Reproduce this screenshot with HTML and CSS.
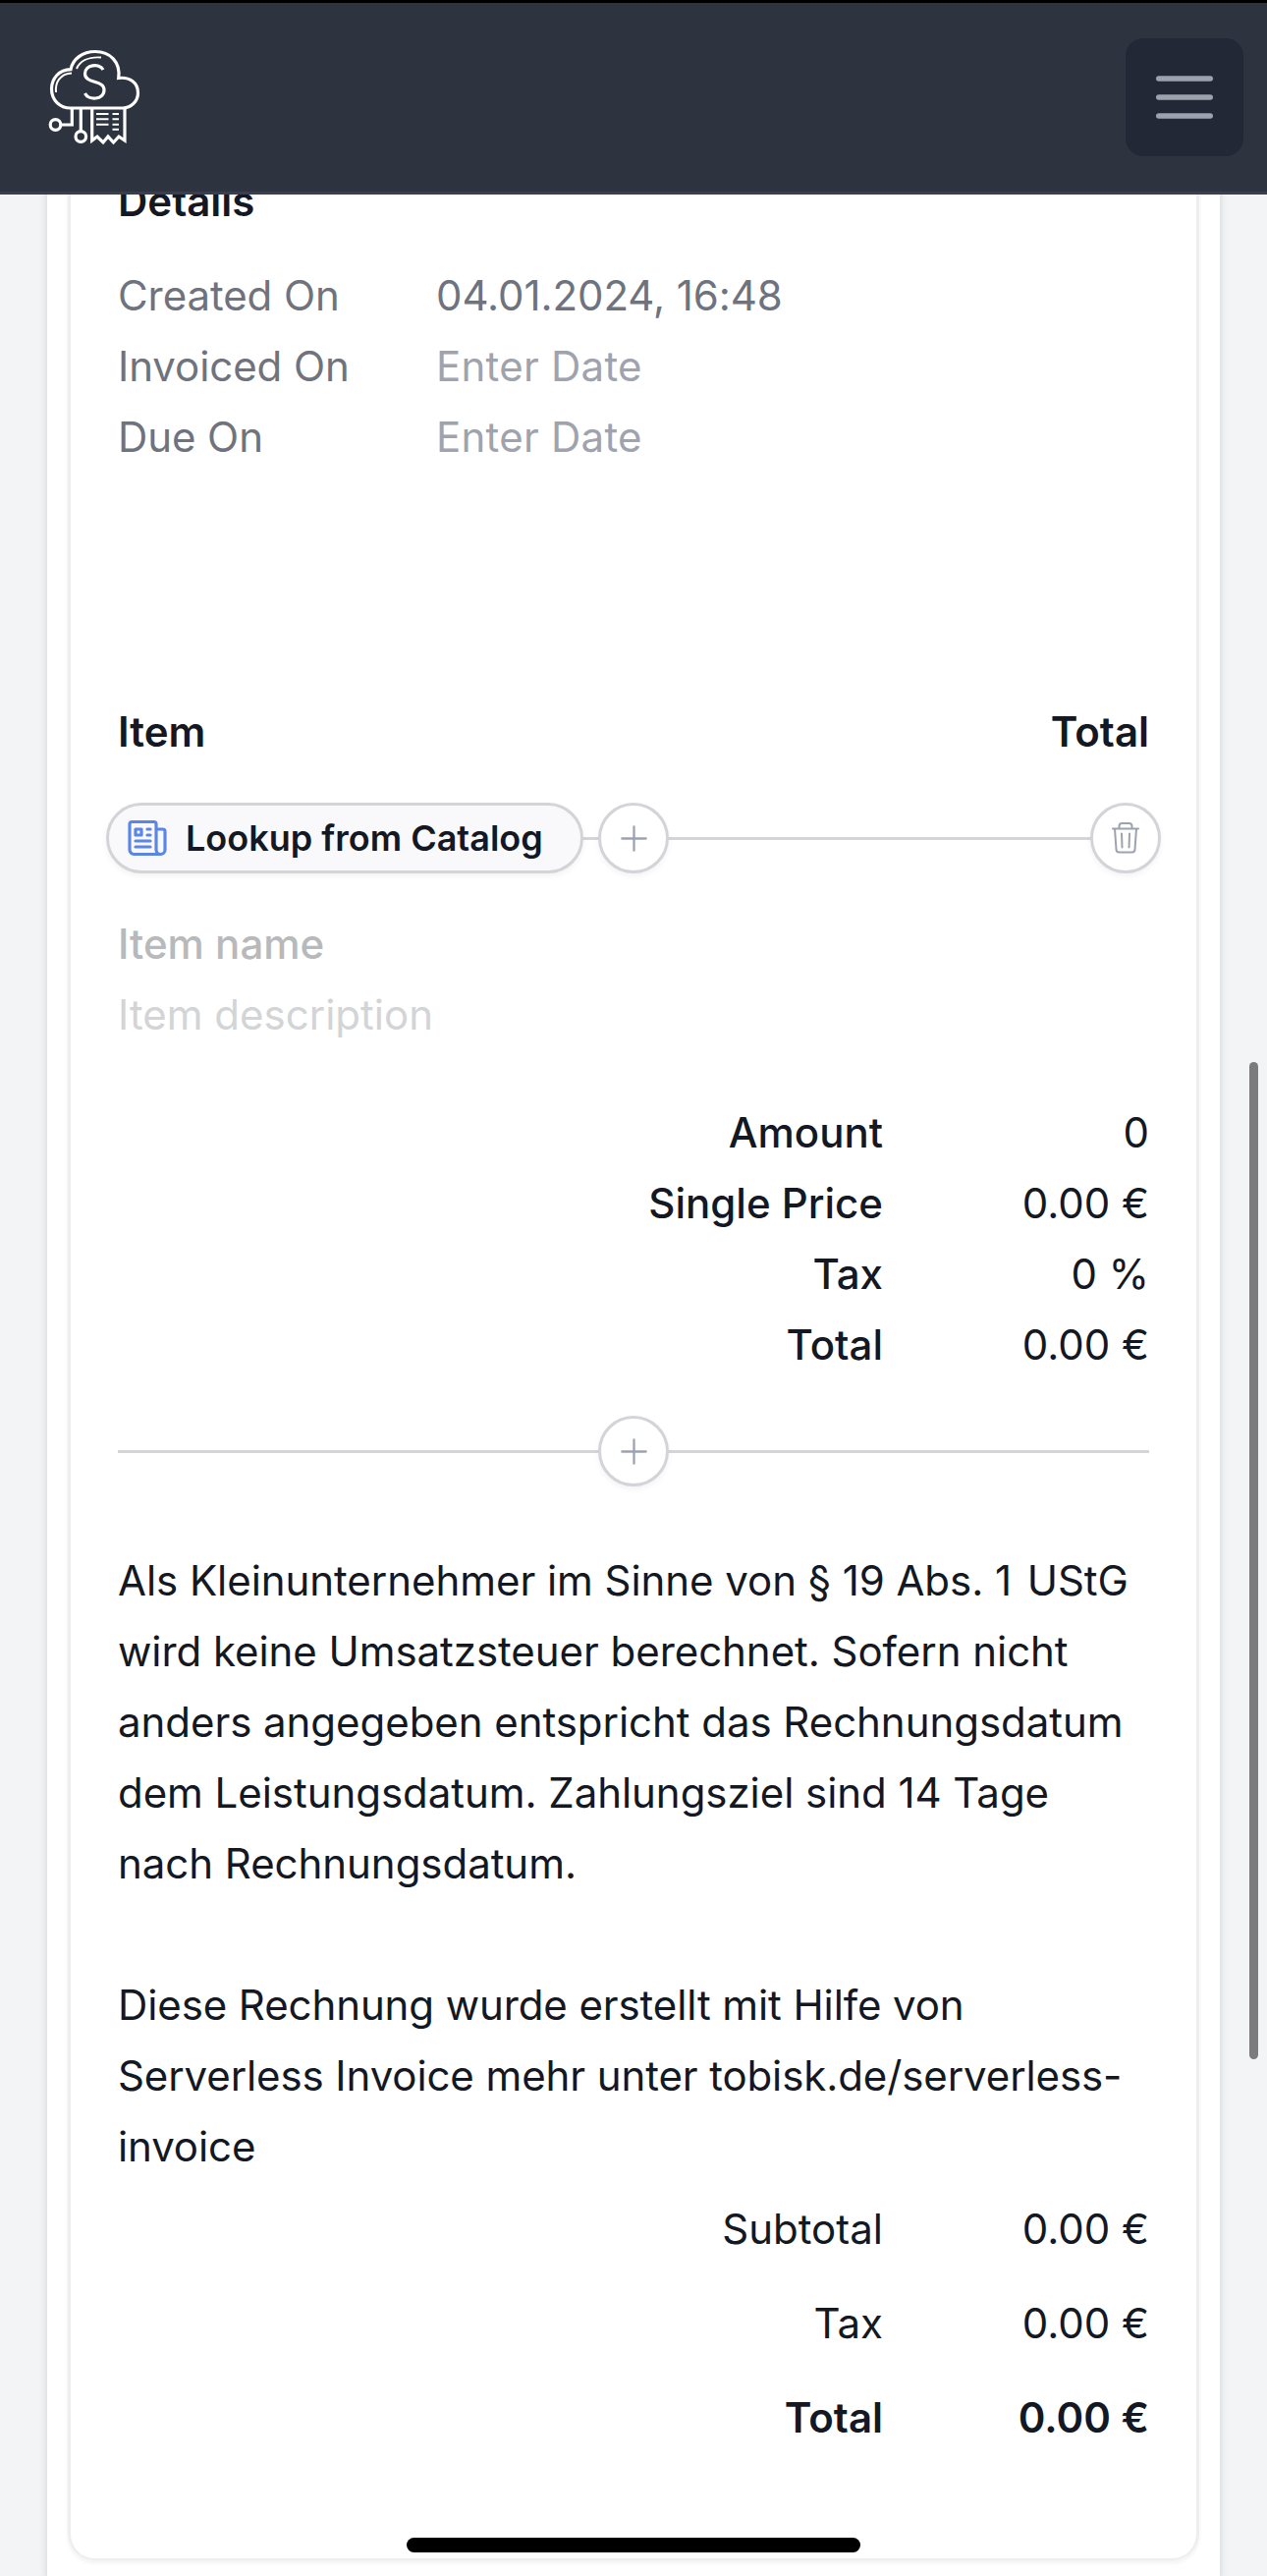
FILE: index.html
```html
<!DOCTYPE html>
<html lang="en">
<head>
<meta charset="utf-8">
<title>Serverless Invoice</title>
<link rel="stylesheet" href="styles.css">
</head>
<body>
<header class="topbar">
  <svg class="logo" viewBox="0 0 102 102" fill="none" stroke="#fff" stroke-width="3.2">
    <path d="M26 62H79A15.500 15.500 0 0 0 94.500 46.500C94.500 36 86 30 74.700 31.500C77 15 66 4.500 51 4.500C38 4.500 28 12 26 22.700C14 23 6.500 32 6.500 42.500C6.500 54 15 62 26 62Z"/>
    <path d="M32 22C35 15 43 9.500 57 10.500M11 46C10 36 15 27 27 26.500" stroke-width="2"/>
    <path d="M59 23C55 16 40.500 17.500 40.500 27C40.500 37.500 60 33 60 43.500C60 54 44 54.500 40.500 47"/>
    <path d="M27.300 62V79H16M36.300 62V85M47.700 62V95L53 91L59 97L64 91L69.500 97L75 91L81 95V62"/>
    <circle cx="10.500" cy="79" r="5.300"/><circle cx="36.300" cy="91" r="5.300"/>
    <path d="M52 68H64.500M52 73.300H64.500M52 78.700H64.500M68.500 68H75M68.500 73.300H75M68.500 78.700H75M68.500 83.700H75" stroke-width="2"/>
  </svg>
  <button class="menu" aria-label="Menu">
    <svg viewBox="0 0 58 44" fill="none" stroke="#9ca3af" stroke-width="5.600" stroke-linecap="round"><path d="M2.800 3h52.400M2.800 22h52.400M2.800 41h52.400"/></svg>
  </button>
</header>
<main class="panel">
  <section class="invoice">
    <h2 class="strong">Details</h2>
    <dl class="details">
      <dt>Created On</dt><dd>04.01.2024, 16:48</dd>
      <dt>Invoiced On</dt><dd class="empty">Enter Date</dd>
      <dt>Due On</dt><dd class="empty">Enter Date</dd>
    </dl>
    <div class="columns strong"><span>Item</span><span>Total</span></div>
    <div class="toolbar">
      <button class="lookup">
        <svg viewBox="0 0 24 24" fill="none" stroke="#5b86e5" stroke-width="1.600" stroke-linecap="round" stroke-linejoin="round"><path d="M12 7.500h1.500m-1.500 3h1.500m-7.500 3h7.500m-7.500 3h7.500m3-9h3.375c.621 0 1.125.504 1.125 1.125V18a2.250 2.250 0 0 1-2.250 2.250M16.500 7.500V18a2.250 2.250 0 0 0 2.250 2.250M16.500 7.500V4.875c0-.621-.504-1.125-1.125-1.125H4.125C3.504 3.750 3 4.254 3 4.875V18a2.250 2.250 0 0 0 2.250 2.250h13.500M6 7.500h3v3H6v-3Z"/></svg>
        <span>Lookup from Catalog</span>
      </button>
      <button class="round" aria-label="Add item"><svg viewBox="0 0 24 24"><path d="M12 4.500v15m7.500-7.500h-15"/></svg></button>
      <button class="round last" aria-label="Delete item"><svg class="trash" viewBox="0 0 32 32"><path d="M3 6.500h26M9.500 6.300V4a3 3 0 0 1 3-3h7a3 3 0 0 1 3 3V6.300M5 6.500l1.500 21a3 3 0 0 0 3 3h13a3 3 0 0 0 3-3L27 6.500M12 11.500l.5 14M20 11.500l-.5 14"/></svg></button>
    </div>
    <p class="name">Item name</p>
    <p class="description">Item description</p>
    <dl class="sums item-sums">
      <dt>Amount</dt><dd>0</dd>
      <dt>Single Price</dt><dd>0.00 €</dd>
      <dt>Tax</dt><dd>0 %</dd>
      <dt>Total</dt><dd>0.00 €</dd>
    </dl>
    <div class="toolbar centered">
      <button class="round" aria-label="Add item"><svg viewBox="0 0 24 24"><path d="M12 4.500v15m7.500-7.500h-15"/></svg></button>
    </div>
    <div class="notes">
      <p>Als Kleinunternehmer im Sinne von § 19 Abs. <span class="numeral">1</span> UStG<br>wird keine Umsatzsteuer berechnet. Sofern nicht<br>anders angegeben entspricht das Rechnungsdatum<br>dem Leistungsdatum. Zahlungsziel sind 14 Tage<br>nach Rechnungsdatum.</p>
      <p class="credit">Diese Rechnung wurde erstellt mit Hilfe von<br>Serverless Invoice mehr unter tobisk.de/serverless-<br>invoice</p>
    </div>
    <dl class="sums invoice-sums">
      <dt>Subtotal</dt><dd>0.00 €</dd>
      <dt>Tax</dt><dd>0.00 €</dd>
      <dt class="strong">Total</dt><dd class="strong">0.00 €</dd>
    </dl>
  </section>
</main>
<div class="scroll-thumb"></div>
<div class="home-indicator"></div>
</body>
</html>
```
FILE: styles.css
```css
* { box-sizing: border-box; }
body, h2, dl, dd, p { margin: 0; }
body {
  height: 2622px;
  overflow: hidden;
  background: #f3f4f6;
  color: #131823;
  font: 400 42px/72px Inter, sans-serif;
}
button { margin: 0; padding: 0; border: 0; color: inherit; font: inherit; }
svg { display: block; flex: none; }
.strong { font-size: 42px; font-weight: 600; }

.topbar {
  position: relative;
  z-index: 1;
  display: flex;
  align-items: center;
  justify-content: space-between;
  height: 198px;
  padding: 0 24px 0 46px;
  border-top: 3px solid #000;
  border-bottom: 3px solid #3b3e4e;
  background: #2e343f;
}
.logo { width: 102px; height: 102px; }
.menu {
  display: flex;
  align-items: center;
  justify-content: center;
  width: 120px;
  height: 120px;
  border-radius: 18px;
  background: #222835;
}
.menu svg { width: 58px; height: 44px; }

.panel {
  height: 2484px;
  margin: -60px 48px 0;
  padding: 0 21px;
  background: #fff;
  box-shadow: 0 3px 9px rgba(0, 0, 0, .1), 0 3px 6px rgba(0, 0, 0, .06);
}
.invoice {
  height: 2468px;
  padding: 31px 48px 0;
  border: 3px solid #eee;
  border-top: 0;
  border-bottom-width: 2px;
  border-radius: 0 0 27px 27px;
  box-shadow: 0 3px 4px rgba(0, 0, 0, .05);
}
.details {
  display: grid;
  grid-template-columns: 324px 1fr;
  margin-top: 24px;
  color: #6e737e;
  letter-spacing: -.08px;
}
.details .empty { color: #9fa3ad; letter-spacing: .25px; }
.columns { display: flex; justify-content: space-between; margin-top: 228px; }

.toolbar {
  display: flex;
  gap: 15px;
  height: 72px;
  margin: 36px -12px;
  background: linear-gradient(#d4d4d9, #d4d4d9) center / calc(100% - 24px) 3px no-repeat;
}
.centered { justify-content: center; }
.lookup, .round {
  display: flex;
  align-items: center;
  height: 72px;
  border: 3px solid #d3d4d8;
  border-radius: 36px;
  box-shadow: 0 3px 6px rgba(0, 0, 0, .05);
}
.lookup {
  gap: 15px;
  width: 486px;
  padding-left: 15px;
  background: #f9f9fc;
  font-size: 36px;
  font-weight: 600;
  white-space: nowrap;
}
.lookup svg { width: 48px; height: 48px; }
.round { justify-content: center; width: 72px; background: #fff; }
.round svg { width: 39px; height: 39px; fill: none; stroke: #9ca3af; stroke-width: 1.4; stroke-linecap: round; stroke-linejoin: round; }
.round .trash { width: 32px; height: 32px; stroke-width: 2; }
.last { margin-left: auto; }

.name { color: #b8b9bb; font-weight: 500; }
.description { color: #d3d4d6; }
.sums {
  display: grid;
  grid-template-columns: 779px 1fr;
  text-align: right;
}
.item-sums { margin-top: 48px; }
.item-sums dt { font-weight: 500; }
.notes { display: grid; gap: 72px; margin-top: 60px; white-space: nowrap; letter-spacing: -.05px; }
.numeral { margin-right: 4px; }
.credit { letter-spacing: -.1px; }
.invoice-sums { row-gap: 24px; margin-top: 12px; }

.scroll-thumb {
  position: absolute;
  top: 1081px;
  right: 9px;
  width: 9px;
  height: 1015px;
  border-radius: 5px;
  background: #7b7b7d;
}
.home-indicator {
  position: absolute;
  top: 2583px;
  left: 414px;
  width: 462px;
  height: 15px;
  border-radius: 8px;
  background: #000;
}
```
